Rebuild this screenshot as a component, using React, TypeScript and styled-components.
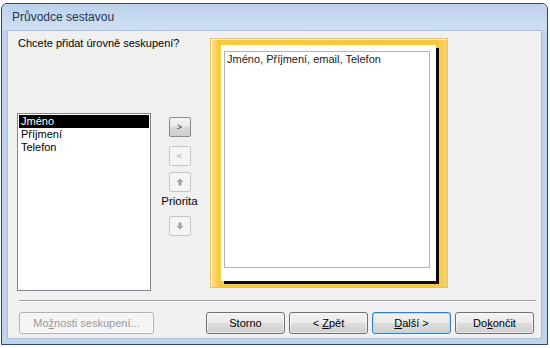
import React from "react";
import styled, { createGlobalStyle } from "styled-components";

const Global = createGlobalStyle`
  html, body { margin: 0; padding: 0; background: #ffffff; overflow: hidden; }
  #root { width: 550px; height: 348px; }
`;

const UI = `"Liberation Sans", Arial, sans-serif`;

const Page = styled.div`
  width: 550px;
  height: 348px;
  box-sizing: border-box;
  padding: 3px 0 0 1px;
  background: #ffffff;
`;

const Window = styled.div`
  width: 547px;
  height: 342px;
  box-sizing: border-box;
  border: 1px solid #37475a;
  border-radius: 6px 6px 0 0;
  background: #bed3ec;
  display: flex;
  flex-direction: column;
`;

const TitleBar = styled.div`
  height: 26px;
  flex: none;
  display: flex;
  align-items: center;
  padding: 0 0 0 10px;
  border-radius: 5px 5px 0 0;
  background: linear-gradient(#bcd2ec, #cfdff2);
  font: 12px ${UI};
  color: #1e3656;
`;

const Content = styled.div`
  flex: 1;
  margin: 0 5px 5px 5px;
  box-sizing: border-box;
  border: 1px solid #a9bfd9;
  background: #f0f0f0;
  display: flex;
  flex-direction: column;
`;

const Main = styled.div`
  height: 269px;
  flex: none;
  display: flex;
  padding-left: 9px;
`;

const LeftCol = styled.div`
  width: 134px;
  display: flex;
  flex-direction: column;
`;

const Heading = styled.div`
  margin-top: 5px;
  padding-left: 1px;
  font: 11px ${UI};
  color: #000;
  white-space: nowrap;
  line-height: 15px;
`;

const ListBox = styled.div`
  margin-top: 62px;
  height: 178px;
  box-sizing: border-box;
  border: 1px solid #828790;
  background: #fff;
  padding: 1px;
`;

const ListItem = styled.div<{ $selected?: boolean }>`
  height: 13px;
  line-height: 13px;
  padding-left: 2px;
  font: 11px ${UI};
  color: ${(p) => (p.$selected ? "#fff" : "#000")};
  background: ${(p) => (p.$selected ? "#000" : "transparent")};
`;

const ArrowCol = styled.div`
  margin-left: 17px;
  padding-top: 86px;
  width: 23px;
  display: flex;
  flex-direction: column;
  align-items: center;
`;

const SmallButton = styled.div<{ $disabled?: boolean; $gap: number }>`
  margin-top: ${(p) => p.$gap}px;
  width: 22px;
  height: 20px;
  box-sizing: border-box;
  border: 1px solid ${(p) => (p.$disabled ? "#c4c6c8" : "#8a8a8a")};
  border-radius: 2px;
  background: ${(p) =>
    p.$disabled ? "#f4f4f4" : "linear-gradient(#f4f4f4, #e8e8e8 50%, #d8d8d8 51%, #cfcfcf)"};
  display: flex;
  align-items: center;
  justify-content: center;
  font: 9px ${UI};
  color: ${(p) => (p.$disabled ? "#b0b0b0" : "#333")};
`;

const Priority = styled.div`
  margin-top: 3px;
  height: 18px;
  line-height: 18px;
  font: 11.5px ${UI};
  color: #000;
  white-space: nowrap;
`;

const PreviewFrame = styled.div`
  margin-left: 19px;
  margin-top: 7px;
  width: 238px;
  height: 250px;
  box-sizing: border-box;
  border: 1px solid #e6c36a;
  background: linear-gradient(90deg, #fbe08a 0px, #f6ca45 8px, #f5c73f 95%, #f7d26c 100%);
  box-shadow: inset 1px 1px 0 #fff3c8;
  padding: 6px 7px 3px 10px;
`;

const Sheet = styled.div`
  width: 215px;
  height: 236px;
  box-sizing: border-box;
  background: #fff;
  box-shadow: 3px 3px 0 #0d0a08;
  padding: 6px 6px 13px 3px;
`;

const SheetPage = styled.div`
  height: 100%;
  box-sizing: border-box;
  border: 1px solid #b4b4b4;
  padding: 1px 2px;
  font: 11px ${UI};
  line-height: 13px;
  color: #1a1a1a;
`;

const Separator = styled.div`
  margin: 0 5px 0 11px;
  height: 1px;
  background: #a0a0a0;
  box-shadow: 0 1px 0 #ffffff;
`;

const ButtonRow = styled.div`
  margin-top: 11px;
  display: flex;
  padding: 0 4px 0 11px;
  gap: 4px;
`;

const PushButton = styled.div<{ $w: number; $default?: boolean; $disabled?: boolean; $ml?: number }>`
  width: ${(p) => p.$w}px;
  height: 22px;
  margin-left: ${(p) => p.$ml ?? 0}px;
  box-sizing: border-box;
  border: 1px solid ${(p) => (p.$disabled ? "#adb2b5" : p.$default ? "#3c7fb1" : "#707070")};
  border-radius: 3px;
  background: ${(p) =>
    p.$disabled
      ? "#f4f4f4"
      : "linear-gradient(#f2f2f2, #ebebeb 50%, #dddddd 51%, #cfcfcf)"};
  box-shadow: inset 0 0 0 1px ${(p) => (p.$default ? "#a9dcf6" : "rgba(255,255,255,0.55)")};
  display: flex;
  align-items: center;
  justify-content: center;
  font: 11px ${UI};
  color: ${(p) => (p.$disabled ? "#9a9a9a" : "#000")};
  white-space: pre;
`;

const Label = styled.span`
  white-space: pre;
`;

const Arrow = ({ down }: { down?: boolean }) => (
  <svg width="8" height="8" viewBox="0 0 8 8" style={{ transform: down ? "rotate(180deg)" : undefined }}>
    <path d="M4 0.5 L7.5 4 L5.5 4 L5.5 7.5 L2.5 7.5 L2.5 4 L0.5 4 Z" fill="#a3a3a3" />
  </svg>
);

export default function App() {
  return (
    <Page>
      <Global />
      <Window>
        <TitleBar>Průvodce sestavou</TitleBar>
        <Content>
          <Main>
            <LeftCol>
              <Heading>Chcete přidat úrovně seskupení?</Heading>
              <ListBox>
                <ListItem $selected>Jméno</ListItem>
                <ListItem>Příjmení</ListItem>
                <ListItem>Telefon</ListItem>
              </ListBox>
            </LeftCol>
            <ArrowCol>
              <SmallButton $gap={0}>&gt;</SmallButton>
              <SmallButton $gap={9} $disabled>&lt;</SmallButton>
              <SmallButton $gap={6} $disabled>
                <Arrow />
              </SmallButton>
              <Priority>Priorita</Priority>
              <SmallButton $gap={3} $disabled>
                <Arrow down />
              </SmallButton>
            </ArrowCol>
            <PreviewFrame>
              <Sheet>
                <SheetPage>Jméno, Příjmení, email, Telefon</SheetPage>
              </Sheet>
            </PreviewFrame>
          </Main>
          <Separator />
          <ButtonRow>
            <PushButton $w={135} $disabled>
              <Label>
                Mo<u>ž</u>nosti seskupení...
              </Label>
            </PushButton>
            <PushButton $w={79} $ml={48}>
              <Label>Storno</Label>
            </PushButton>
            <PushButton $w={79}>
              <Label>
                {"< "}
                <u>Z</u>pět
              </Label>
            </PushButton>
            <PushButton $w={79} $default>
              <Label>
                <u>D</u>alší{" >"}
              </Label>
            </PushButton>
            <PushButton $w={79}>
              <Label>
                Do<u>k</u>ončit
              </Label>
            </PushButton>
          </ButtonRow>
        </Content>
      </Window>
    </Page>
  );
}
